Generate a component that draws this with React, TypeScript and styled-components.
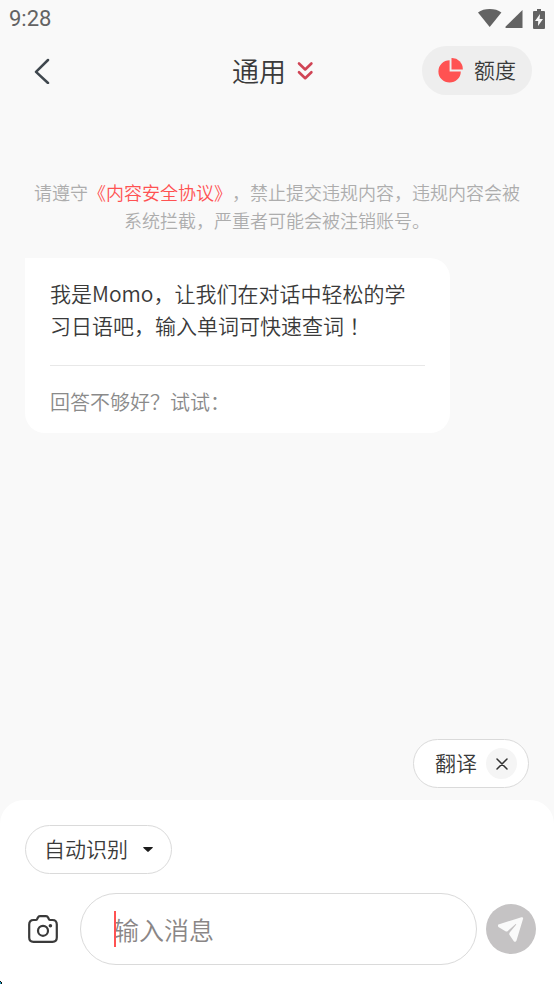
import React from "react";
import styled, { createGlobalStyle } from "styled-components";

const Global = createGlobalStyle`
  * { box-sizing: border-box; }
  body { margin: 0; background: #f9f9f9; }
  button, input, select {
    font: inherit;
    color: inherit;
    margin: 0;
    padding: 0;
    border: 0;
    background: none;
  }
  svg { display: block; flex: none; }
`;

const Page = styled.div`
  position: relative;
  display: flex;
  flex-direction: column;
  min-height: 100vh;
  background: #f9f9f9;
  color: #3a3a3a;
  font-family: "Noto Sans CJK SC", sans-serif;
  font-weight: 350;
  font-size: 21px;
  line-height: 32px;
  text-spacing-trim: space-all;
`;

const StatusBar = styled.div`
  display: flex;
  align-items: center;
  justify-content: space-between;
  height: 38px;
  padding: 0 8px 0 9px;
  color: #636363;
  font-family: Roboto, sans-serif;
  font-weight: 400;
  font-size: 22px;
`;

const StatusIcons = styled.div`
  display: flex;
  align-items: center;
`;

const Header = styled.header`
  display: grid;
  grid-template-columns: 1fr auto 1fr;
  align-items: center;
  height: 65px;
  padding: 0 22px 0 14px;
`;

const BackButton = styled.button`
  display: flex;
  align-items: center;
  justify-content: center;
  width: 56px;
  height: 48px;
`;

const TitleButton = styled.button`
  display: flex;
  align-items: center;
  gap: 11px;
  font-size: 27px;
  line-height: 40px;
`;

const PillLabel = styled.span`
  padding-bottom: 3px;
`;

const QuotaButton = styled.button`
  display: flex;
  align-items: center;
  justify-self: end;
  gap: 11px;
  height: 49px;
  padding: 0 16px;
  border-radius: 25px;
  background: #eeeeee;
`;

const Chat = styled.main`
  display: flex;
  flex: 1;
  flex-direction: column;
  padding: 75px 25px 12px;
`;

const Notice = styled.p`
  margin: 0 5px 24px;
  color: #adadad;
  font-size: 18px;
  line-height: 28px;
  text-align: center;
`;

const NoticeLink = styled.a`
  color: #ff5252;
  text-decoration: none;
`;

const Bubble = styled.article`
  max-width: 425px;
  padding: 19px 25px 15px;
  border-radius: 0 20px 20px 20px;
  background: #ffffff;
`;

const Message = styled.p`
  margin: 0;
  padding-bottom: 24px;
  border-bottom: 1px solid #e8e8e8;
`;

const CenteredMark = styled.span`
  font-family: "Noto Sans CJK JP", sans-serif;
`;

const Feedback = styled.p`
  margin: 0;
  padding-top: 20px;
  color: #8a8a8a;
  font-size: 20px;
`;

const Chip = styled.div`
  display: flex;
  align-items: center;
  align-self: flex-end;
  gap: 9px;
  height: 49px;
  margin-top: auto;
  padding: 0 11px 0 21px;
  border: 1px solid #dadada;
  border-radius: 25px;
  background: #ffffff;
`;

const ChipClose = styled.button`
  display: flex;
  align-items: center;
  justify-content: center;
  width: 31px;
  height: 31px;
  border-radius: 50%;
  background: #f5f5f5;
`;

const Composer = styled.footer`
  display: flex;
  flex-direction: column;
  align-items: stretch;
  gap: 19px;
  padding: 25px 18px 19px 25px;
  border-radius: 24px 24px 0 0;
  background: #ffffff;
`;

const ModePicker = styled.label`
  display: flex;
  align-items: center;
  align-self: flex-start;
  gap: 15px;
  height: 49px;
  padding: 0 18px;
  border: 1px solid #dadada;
  border-radius: 25px;
`;

const ModeSelect = styled.select`
  appearance: none;
  outline: 0;
  padding-bottom: 3px;
`;

const InputRow = styled.form`
  display: flex;
  align-items: center;
`;

const CameraButton = styled.button`
  display: flex;
  align-items: center;
  justify-content: center;
  width: 36px;
  height: 48px;
`;

const Field = styled.div`
  position: relative;
  flex: 1;
  min-width: 0;
  height: 72px;
  margin: 0 9px 0 19px;
  border: 1px solid #dadada;
  border-radius: 36px;
`;

const TextInput = styled.input`
  width: 100%;
  height: 100%;
  padding: 0 33px;
  outline: 0;
  border-radius: 36px;
  font-size: 25px;
  caret-color: #ff5252;
  &::placeholder { color: #8a8686; opacity: 1; }
`;

const Caret = styled.span`
  position: absolute;
  left: 33px;
  top: 17px;
  width: 2px;
  height: 36px;
  background: #ff5252;
`;

const SendButton = styled.button`
  display: flex;
  align-items: center;
  justify-content: center;
  width: 50px;
  height: 50px;
  border-radius: 50%;
  background: #c5c3c4;
`;

const Corner = styled.svg`
  position: absolute;
  left: 0;
  bottom: 0;
`;

const WifiIcon = () => (
  <svg width="24" height="20" viewBox="0 0 24 20" fill="#636363">
    <path d="M0 3.600C3 1 7.200 0 11.700 0s8.700 1 11.700 3.600L11.700 18z" />
  </svg>
);

const SignalIcon = () => (
  <svg width="27" height="20" viewBox="0 0 27 20" fill="#636363">
    <path d="M20.500 1V19H4Q3 18.300 3.700 17.500z" />
  </svg>
);

const BatteryIcon = () => (
  <svg width="17" height="20" viewBox="0 0 17 20">
    <path fill="#636363" d="M8 0h4v2h3q1 0 1 1v16q0 1-1 1H5q-1 0-1-1V3q0-1 1-1h3z" />
    <path fill="#f9f9f9" d="M11 5l-5 7h3.200L9 17l5-7h-3.400z" />
  </svg>
);

const BackIcon = () => (
  <svg width="16" height="26" viewBox="0 0 16 26" fill="none" stroke="#3f474e" strokeWidth="2.500" strokeLinecap="round" strokeLinejoin="round">
    <path d="M14 2L2 13.800 14 25" />
  </svg>
);

const DoubleChevronIcon = () => (
  <svg width="17" height="20" viewBox="0 0 17 20" fill="none" stroke="#d04455" strokeWidth="2.600" strokeLinecap="round" strokeLinejoin="round">
    <path d="M2 2.500l6.200 6 6.200-6M2 11.200l6.200 6 6.200-6" />
  </svg>
);

const PieIcon = () => (
  <svg width="25" height="25" viewBox="0 0 25 25" fill="#ff5252">
    <path d="M11.600 2.200V13.400H22.800A11.200 11.200 0 1 1 11.600 2.200z" />
    <path d="M13.500 0A11 11 0 0 1 24.800 11.400H13.500z" />
  </svg>
);

const CloseIcon = () => (
  <svg width="12" height="12" viewBox="0 0 12 12" fill="none" stroke="#333" strokeWidth="1.500" strokeLinecap="round">
    <path d="M1 1l10 10M11 1L1 11" />
  </svg>
);

const ArrowIcon = () => (
  <svg width="10" height="5" viewBox="0 0 10 5" fill="#1c1c1c">
    <path d="M0.500 0h9q.6.3 0 .9L5.700 4.600q-.7.6-1.400 0L.5.900Q0 .3.500 0z" />
  </svg>
);

const CameraIcon = () => (
  <svg width="30" height="28" viewBox="0 0 30 28" fill="none" stroke="#3a3a3a" strokeWidth="2.200" strokeLinejoin="round">
    <path d="M5.500 5H7.500Q8.800 5 9.300 3.800L9.800 2.700Q10.500 1.200 12 1.200h6q1.500 0 2.200 1.500l.5 1.100Q21.200 5 22.500 5h2Q28.800 5 28.800 9.500V22.500Q28.800 26.800 24.500 26.800H5.500Q1.200 26.800 1.200 22.500V9.500Q1.200 5 5.500 5z" />
    <circle cx="15" cy="15.800" r="5" />
    <circle cx="22.400" cy="10.700" r="1.800" fill="#3a3a3a" stroke="none" />
  </svg>
);

const SendIcon = () => (
  <svg width="26" height="26" viewBox="0 0 26 26" fill="#fafafa">
    <path d="M.4 8.500L23.400 1.200Q25.600.8 25 3L18.500 24.600Q17.700 26.600 16 25.400L11.400 18.800Q10.900 17.600 11.700 16.600L18.300 8.400Q18.100 7.800 17.700 8.100L9.600 15.200Q8.600 15.900 7.500 15.300L.4 10.900Q-.8 9.500.4 8.500z" />
  </svg>
);

export default function App() {
  return (
    <Page>
      <Global />
      <StatusBar>
        <span>9:28</span>
        <StatusIcons>
          <WifiIcon />
          <SignalIcon />
          <BatteryIcon />
        </StatusIcons>
      </StatusBar>
      <Header>
        <BackButton type="button" aria-label="返回"><BackIcon /></BackButton>
        <TitleButton type="button">通用<DoubleChevronIcon /></TitleButton>
        <QuotaButton type="button"><PieIcon /><PillLabel>额度</PillLabel></QuotaButton>
      </Header>
      <Chat>
        <Notice>
          请遵守<NoticeLink href="#policy">《内容安全协议》</NoticeLink>，禁止提交违规内容，违规内容会被系统拦截，严重者可能会被注销账号。
        </Notice>
        <Bubble>
          <Message>
            我是Momo，让我们在对话中轻松的学习日语吧，输入单词可快速查词<CenteredMark lang="ja">！</CenteredMark>
          </Message>
          <Feedback>回答不够好？试试：</Feedback>
        </Bubble>
        <Chip>
          <PillLabel>翻译</PillLabel>
          <ChipClose type="button" aria-label="关闭翻译"><CloseIcon /></ChipClose>
        </Chip>
      </Chat>
      <Composer>
        <ModePicker>
          <ModeSelect aria-label="识别模式">
            <option>自动识别</option>
          </ModeSelect>
          <ArrowIcon />
        </ModePicker>
        <InputRow onSubmit={(e) => e.preventDefault()}>
          <CameraButton type="button" aria-label="拍照"><CameraIcon /></CameraButton>
          <Field>
            <TextInput type="text" aria-label="消息" placeholder="输入消息" />
            <Caret />
          </Field>
          <SendButton type="submit" aria-label="发送"><SendIcon /></SendButton>
        </InputRow>
      </Composer>
      <Corner width="2" height="3" viewBox="0 0 2 3" aria-hidden="true">
        <path fill="#111" d="M0 0h1v1h1v2H0z" />
        <path fill="#1a9cc0" d="M0 1h1v2H0z" />
      </Corner>
    </Page>
  );
}
